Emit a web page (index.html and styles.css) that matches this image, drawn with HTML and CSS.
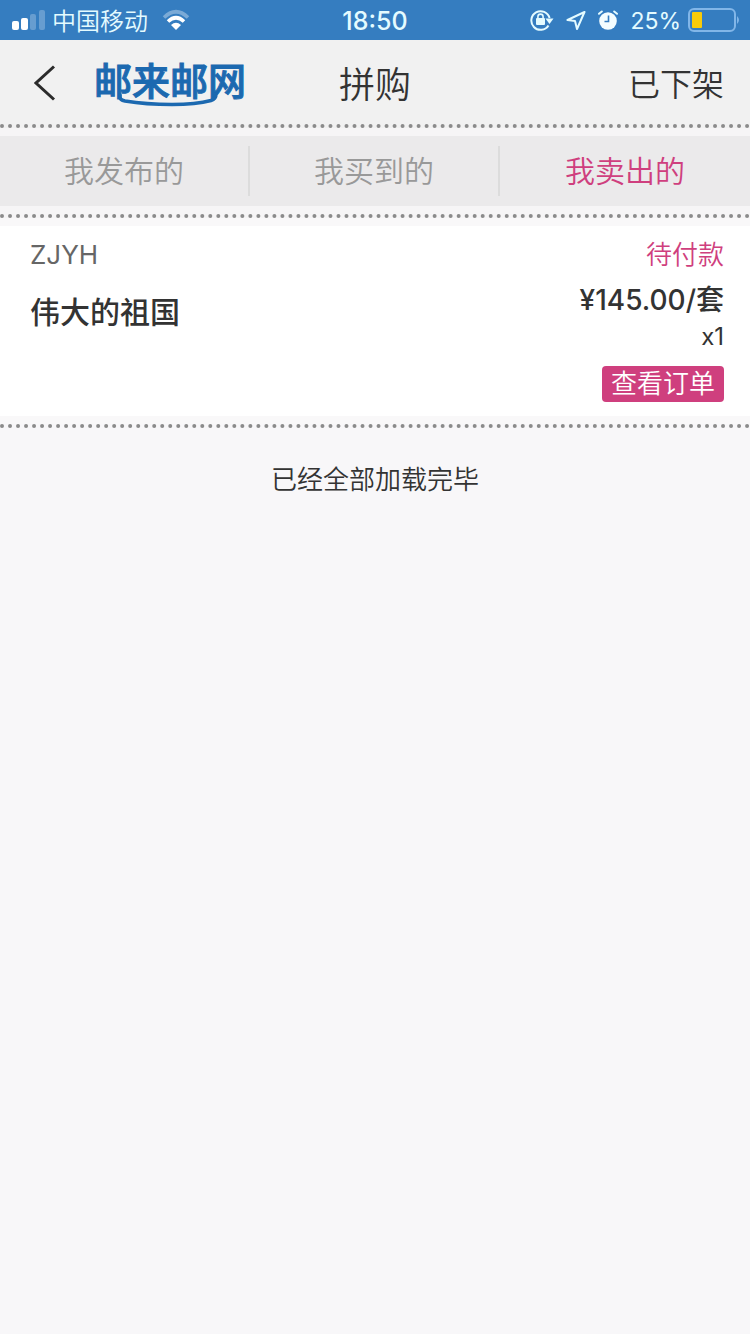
FILE: index.html
```html
<!DOCTYPE html>
<html lang="zh-CN">
<head>
<meta charset="utf-8">
<meta name="viewport" content="width=device-width, initial-scale=1">
<title>拼购</title>
<link rel="stylesheet" href="styles.css">
</head>
<body>
<div class="status">
  <div class="status-side">
    <svg class="signal" width="34" height="20" viewBox="0 0 34 20" fill="#fff" aria-hidden="true">
      <rect x="0" y="11" width="7" height="9" rx="2"/>
      <rect x="9" y="8" width="7" height="12" rx="2"/>
      <rect x="18" y="4" width="6" height="16" rx="2" opacity=".25"/>
      <rect x="27" y="0" width="6" height="20" rx="2" opacity=".25"/>
    </svg>
    <span class="carrier">中国移动</span>
    <svg class="wifi" width="28" height="22" viewBox="0 0 28 22" fill="none" stroke="#fff" stroke-width="3.600" aria-hidden="true">
      <path d="M2 8.500Q14-3 26 8.500" opacity=".35"/>
      <path d="M6 12.500Q14 5 22 12.500"/>
      <path d="M9 16Q14 11.500 19 16L14 21Z" fill="#fff" stroke="none"/>
    </svg>
  </div>
  <time class="clock">18:50</time>
  <div class="status-side status-right">
    <svg width="24" height="22" viewBox="0 0 24 22" fill="none" stroke="#e4fbff" stroke-width="2" aria-hidden="true">
      <path d="M18.500 16.500A9.300 9.300 0 1 1 19.600 9"/>
      <path d="M15.500 9.500h8l-4 5.500Z" fill="#e4fbff" stroke="none"/>
      <rect x="6" y="9" width="9" height="7" rx="1" fill="#e4fbff" stroke="none"/>
      <path d="M7.900 10V7.700a2.600 2.600 0 0 1 5.200 0V10" stroke-width="1.600"/>
    </svg>
    <svg width="20" height="20" viewBox="0 0 20 20" fill="none" stroke="#e4fbff" stroke-width="2" stroke-linejoin="round" aria-hidden="true">
      <path d="M18.500 2L1.500 10 9 11 11 19Z"/>
    </svg>
    <svg width="20" height="20" viewBox="0 0 20 20" aria-hidden="true">
      <circle cx="10" cy="11" r="8.800" fill="#f4fdff"/>
      <path d="M10.500 5.500V11.500H6.500" fill="none" stroke="#357dc0" stroke-width="1.600"/>
      <path d="M1 3.800L3.800 1.500M19 3.800L16.200 1.500" stroke="#e4fbff" stroke-width="2" stroke-linecap="round"/>
    </svg>
    <span class="percent">25%</span>
    <svg class="battery" width="52" height="24" viewBox="0 0 52 24" aria-hidden="true">
      <rect x="1" y="1" width="46" height="22" rx="5" fill="none" stroke="#82b6e8" stroke-width="2"/>
      <rect x="4" y="4" width="10" height="16" rx="1" fill="#f8cb09"/>
      <path d="M49 8q4 4 0 8Z" fill="#82b6e8"/>
    </svg>
  </div>
</div>

<header class="header">
  <div class="brand">
    <button class="back" type="button" aria-label="返回">
      <svg width="22" height="36" viewBox="0 0 22 36" fill="none" stroke="#2b2b2b" stroke-width="3" aria-hidden="true"><path d="M20 1.500L2 18 20 34.500"/></svg>
    </button>
    <a class="logo" href="#">
      <span class="logo-text">邮来邮网</span>
      <svg class="swoosh" viewBox="0 0 152 48" fill="none" stroke="#1c69b0" aria-hidden="true">
        <path d="M26 36V38Q26 41 31 42Q52 45.500 78 45.500Q102 45.500 117 41.500Q122 40 122 35" stroke-width="3.600" stroke-linecap="round"/>
      </svg>
    </a>
  </div>
  <h1 class="title">拼购</h1>
  <a class="offline" href="#">已下架</a>
</header>

<nav class="tabs">
  <a class="tab" href="#">我发布的</a>
  <a class="tab" href="#">我买到的</a>
  <a class="tab tab-active" href="#" aria-current="page">我卖出的</a>
</nav>

<main class="orders">
  <article class="order">
    <div class="order-info">
      <p class="seller">ZJYH</p>
      <h2 class="name">伟大的祖国</h2>
    </div>
    <div class="order-detail">
      <p class="state">待付款</p>
      <p class="price">¥145.00/套</p>
      <p class="count">x1</p>
      <button class="view" type="button">查看订单</button>
    </div>
  </article>
  <p class="end">已经全部加载完毕</p>
</main>
</body>
</html>
```
FILE: styles.css
```css
* {
  box-sizing: border-box;
}

body {
  margin: 0;
  min-height: 100vh;
  background: #f8f7f9;
  color: #333;
  font-family: "Inter", "Noto Sans CJK SC", sans-serif;
  font-weight: 350;
}

h1, h2, p {
  margin: 0;
}

a {
  color: inherit;
  text-decoration: none;
}

button {
  border: 0;
  padding: 0;
  background: none;
  font: inherit;
  cursor: pointer;
}

svg {
  display: block;
  flex: none;
}

.status {
  display: grid;
  grid-template-columns: 1fr auto 1fr;
  align-items: center;
  height: 40px;
  padding: 0 12px;
  background: #357dc0;
  color: #e4fbff;
  font-size: 24px;
  line-height: 36px;
}

.status-side {
  display: flex;
  align-items: center;
}

.carrier {
  margin: 0 14px 0 6px;
  padding-top: 4px;
}

.clock {
  padding-top: 2px;
  font-size: 25px;
  font-weight: 500;
}

.status-right {
  justify-content: flex-end;
  gap: 12px;
}

.percent {
  padding-top: 2px;
  font-size: 23px;
  font-weight: 400;
}

.battery {
  margin: 0 -2px 0 -5px;
}

.header {
  display: grid;
  grid-template-columns: 1fr auto 1fr;
  align-items: center;
  height: 88px;
  padding: 0 26px;
  border-bottom: 4px dotted #8b8b8b;
  background: #f1f1f1;
}

.brand {
  display: flex;
  align-items: center;
  gap: 38px;
  padding: 2px 0 0 8px;
}

.logo {
  position: relative;
  padding-bottom: 4px;
  color: #1c69b0;
  font-size: 38px;
  line-height: 44px;
  font-weight: 500;
  white-space: nowrap;
}

.logo-text {
  -webkit-text-stroke: 1px #1c69b0;
}

.swoosh {
  position: absolute;
  inset: 0;
  width: 100%;
}

.title {
  font-size: 36px;
  font-weight: 350;
}

.offline {
  justify-self: end;
  font-size: 32px;
}

.tabs {
  display: grid;
  grid-template-columns: repeat(3, 1fr);
  padding: 8px 0;
  border-bottom: 4px dotted #8b8b8b;
  background: linear-gradient(#ebeaeb, #ebeaeb) content-box, #f6f5f6;
  color: #999;
  font-size: 30px;
  line-height: 50px;
  text-align: center;
}

.tab {
  margin: 10px 0;
  border-right: 2px solid #dcdcdc;
}

.tab:last-child {
  border-right: 0;
}

.tab-active {
  color: #cf3f7e;
}

.order {
  display: flex;
  justify-content: space-between;
  padding: 12px 26px 14px 30px;
  border: solid #f9f8f9;
  border-width: 8px 0;
  background: #fff;
}

.orders {
  text-align: center;
}

.order-info {
  text-align: left;
}

.seller {
  color: #666;
  font-size: 26px;
  line-height: 34px;
  font-weight: 400;
}

.name {
  margin-top: 20px;
  font-size: 30px;
  line-height: 40px;
  font-weight: 500;
}

.order-detail {
  display: flex;
  flex-direction: column;
  align-items: flex-end;
  text-align: right;
}

.state {
  color: #cf3f7e;
  font-size: 26px;
  line-height: 34px;
}

.price {
  margin-top: 8px;
  font-size: 28px;
  line-height: 40px;
  font-weight: 500;
}

.count {
  font-size: 24px;
  line-height: 34px;
  font-weight: 400;
}

.view {
  height: 36px;
  margin-top: 12px;
  padding: 0 9px;
  border-radius: 4px;
  background: #cf3f7e;
  color: #fff;
  font-size: 26px;
  line-height: 36px;
}

.end {
  padding: 32px;
  border-top: 4px dotted #8b8b8b;
  font-size: 26px;
  line-height: 40px;
}
```
